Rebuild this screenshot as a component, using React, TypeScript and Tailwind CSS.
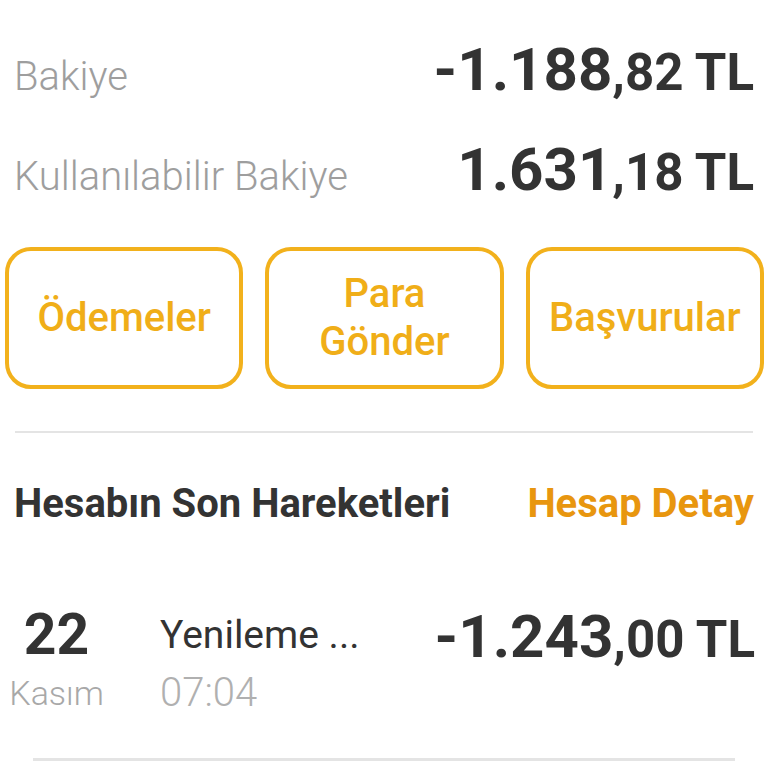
import React from "react";

const font = { fontFamily: "Roboto, 'Noto Sans', sans-serif" };

function Amount({ whole, cents }: { whole: string; cents: string }) {
  return (
    <span className="font-bold text-[#333333] whitespace-nowrap">
      <span className="text-[60px]">{whole}</span>
      <span className="text-[51px]">,{cents} TL</span>
    </span>
  );
}

function ActionButton({ label }: { label: React.ReactNode }) {
  return (
    <button className="flex h-[142px] flex-1 items-center justify-center rounded-[26px] border-[4px] border-[#f2b11c] text-center text-[40px] font-medium leading-[48px] text-[#f0ae18]">
      {label}
    </button>
  );
}

export default function App() {
  return (
    <div className="min-h-[768px] w-[768px] overflow-hidden bg-white" style={font}>
      <div className="px-[14px] pt-[34px]">
        <div className="flex h-[72px] items-baseline justify-between leading-[72px]">
          <span className="text-[40px] font-light text-[#9e9e9e]">Bakiye</span>
          <Amount whole="-1.188" cents="82" />
        </div>
        <div className="mt-[28px] flex h-[72px] items-baseline justify-between leading-[72px]">
          <span className="text-[40px] font-light text-[#9e9e9e]">Kullanılabilir Bakiye</span>
          <Amount whole="1.631" cents="18" />
        </div>
      </div>

      <div className="mt-[41px] flex gap-[22px] pl-[5px] pr-[4px]">
        <ActionButton label="Ödemeler" />
        <ActionButton
          label={
            <span>
              Para
              <br />
              Gönder
            </span>
          }
        />
        <ActionButton label="Başvurular" />
      </div>

      <div className="mx-[15px] mt-[42px] h-[2px] bg-[#e4e4e4]" />

      <div className="mt-[47px] flex items-baseline justify-between px-[14px] leading-[48px]">
        <span className="text-[40px] font-bold text-[#333333]">Hesabın Son Hareketleri</span>
        <span className="text-[40px] font-bold text-[#e8960f]">Hesap Detay</span>
      </div>

      <div className="mt-[77px] flex items-start pl-[10px] pr-[13px]">
        <div className="flex w-[93px] flex-col items-center">
          <span className="text-[57px] font-bold leading-[60px] text-[#333333]">22</span>
          <span className="mt-[8px] text-[34px] font-light leading-[40px] text-[#a8a8a8]">Kasım</span>
        </div>
        <div className="ml-[57px] flex flex-col">
          <span className="text-[39px] leading-[60px] text-[#333333]">Yenileme ...</span>
          <span className="mt-[8px] text-[40px] font-light leading-[40px] text-[#b0b0b0]">07:04</span>
        </div>
        <div className="ml-auto pt-[2px] leading-[60px]">
          <Amount whole="-1.243" cents="00" />
        </div>
      </div>

      <div className="mx-[33px] mt-[45px] h-[3px] bg-[#e4e4e4]" />
    </div>
  );
}
